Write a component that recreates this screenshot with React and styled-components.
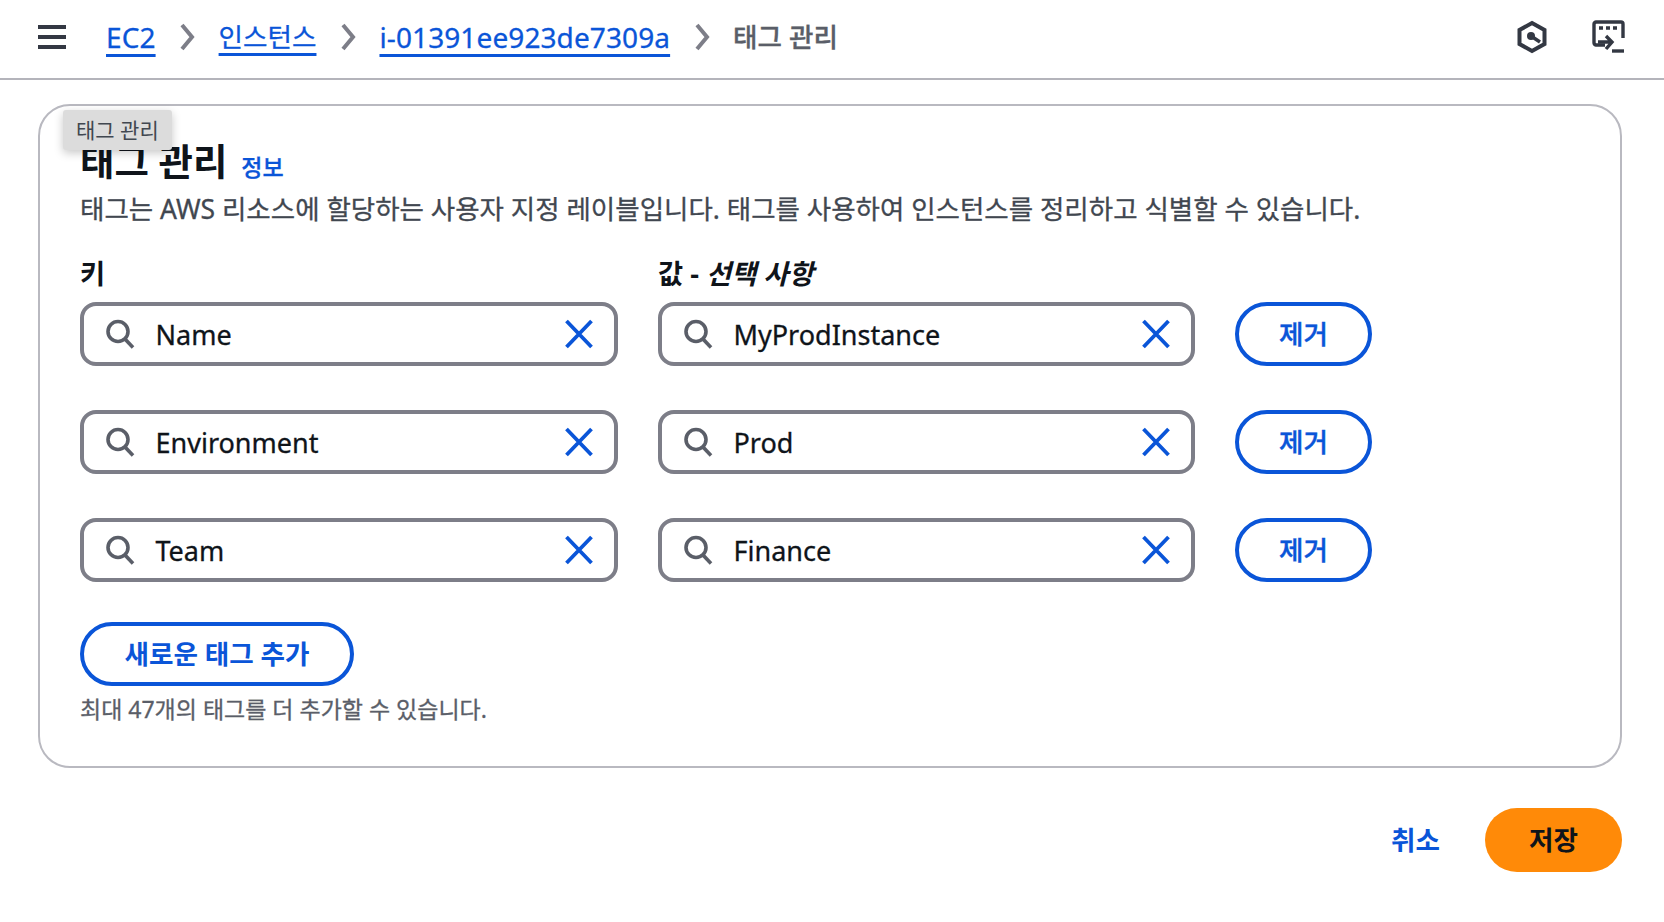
import React from "react";
import styled, { createGlobalStyle } from "styled-components";

const GlobalStyle = createGlobalStyle`
  * { box-sizing: border-box; }
  html, body { margin: 0; padding: 0; background: #fff; }
  body {
    font-family: "Noto Sans", "Noto Sans CJK KR", sans-serif;
    color: #0f141a;
  }
`;

const BLUE = "#0a55d8";

const Page = styled.div`
  width: 1664px;
  height: 922px;
  overflow: hidden;
`;

const TopBar = styled.header`
  height: 80px;
  border-bottom: 2px solid #b4b4bb;
  display: flex;
  align-items: center;
  padding: 0 39px 5px 37px;
`;

const MenuIcon = styled.svg`
  width: 30px;
  height: 30px;
  margin-right: 39px;
  flex: none;
`;

const Crumbs = styled.nav`
  display: flex;
  align-items: center;
  flex: 1;
  font-size: 28px;
  line-height: 40px;
  -webkit-text-stroke: 0.3px currentColor;
`;

const CrumbLink = styled.a`
  color: ${BLUE};
  font-size: ${(p) => (p.$ko ? "26.6px" : "28px")};
  letter-spacing: ${(p) => (p.$ko ? "0" : "0.1px")};
  text-decoration: underline;
  text-underline-offset: 6px;
  text-decoration-thickness: 2.500px;
`;

const CrumbCurrent = styled.span`
  color: #5a5e68;
  font-size: 26.6px;
  font-weight: 500;
`;

const Chevron = styled.svg`
  width: 18px;
  height: 28px;
  margin: 0 22.500px;
  flex: none;
`;

const TopIcons = styled.div`
  display: flex;
  align-items: center;
  gap: 43px;
`;

const Main = styled.main`
  padding: 24px 42px 0 38px;
`;

const Card = styled.section`
  position: relative;
  height: 664px;
  border: 2px solid #b9b9c0;
  border-radius: 32px;
  padding: 32px 40px 0 40px;
`;

const Tooltip = styled.div`
  position: absolute;
  top: 4px;
  left: 23px;
  height: 40px;
  padding: 0 13px 3px 13px;
  display: flex;
  align-items: center;
  background: #dcdcdc;
  border-radius: 3px;
  font-size: 21px;
  color: #414750;
  box-shadow: 0 3px 10px rgba(0, 0, 0, 0.22);
  z-index: 2;
`;

const TitleRow = styled.div`
  display: flex;
  align-items: baseline;
  gap: 14px;
`;

const Title = styled.h1`
  margin: 0;
  font-size: 37.400px;
  line-height: 48px;
  font-weight: 700;
`;

const InfoLink = styled.a`
  color: ${BLUE};
  font-size: 23px;
  font-weight: 500;
  -webkit-text-stroke: 0.3px currentColor;
`;

const Description = styled.p`
  margin: 3px 0 0;
  font-size: 26.500px;
  line-height: 40px;
  color: #414750;
  white-space: nowrap;
  -webkit-text-stroke: 0.3px currentColor;
`;

const Fields = styled.div`
  display: grid;
  grid-template-columns: 538px 537px 137px;
  column-gap: 40px;
  row-gap: 44px;
  margin-top: 27px;
`;

const FieldColumn = styled.div`
  display: flex;
  flex-direction: column;
  gap: 10px;
`;

const Label = styled.label`
  font-size: 27.300px;
  line-height: 36px;
  font-weight: 700;
  white-space: nowrap;
`;

const InputBox = styled.div`
  height: 64px;
  border: 4px solid #7d7e88;
  border-radius: 16px;
  display: flex;
  align-items: center;
  padding: 0 19.500px 0 20px;
  font-size: 27px;
`;

const InputValue = styled.span`
  flex: 1;
  margin-left: 19.500px;
  -webkit-text-stroke: 0.3px currentColor;
`;

const PillButton = styled.button`
  height: 64px;
  padding: 0 0 3px;
  width: ${(p) => p.$width}px;
  border: 4px solid ${BLUE};
  border-radius: 32px;
  background: #fff;
  color: ${BLUE};
  font-family: inherit;
  font-size: 26.600px;
  font-weight: ${(p) => p.$weight || 700};
  -webkit-text-stroke: ${(p) => (p.$weight ? "0.4px currentColor" : "0")};
`;

const RemoveCell = styled.div`
  align-self: end;
`;

const AddRow = styled.div`
  margin-top: 40px;
`;

const Helper = styled.p`
  margin: 5px 0 0;
  font-size: 23px;
  line-height: 36px;
  color: #5a5e68;
  -webkit-text-stroke: 0.3px currentColor;
`;

const Footer = styled.footer`
  display: flex;
  justify-content: flex-end;
  align-items: center;
  gap: 45px;
  margin-top: 40px;
`;

const TextButton = styled.a`
  color: ${BLUE};
  font-size: 26.600px;
  font-weight: 700;
  padding-bottom: 3px;
`;

const SaveButton = styled.button`
  width: 137px;
  height: 64px;
  padding: 0 0 3px;
  border: 0;
  border-radius: 32px;
  background: #ff8a08;
  color: #0f141a;
  font-family: inherit;
  font-size: 26.600px;
  font-weight: 700;
`;

const SearchIcon = () => (
  <svg width="32" height="32" viewBox="0 0 32 32" fill="none" stroke="#5a5e68" strokeWidth="3.6" style={{ flex: "none" }}>
    <circle cx="14" cy="13.5" r="10" />
    <path d="M21 21l8 8.5" />
  </svg>
);

const ClearIcon = () => (
  <svg width="32" height="32" viewBox="0 0 32 32" fill="none" stroke={BLUE} strokeWidth="3.8" style={{ flex: "none" }}>
    <path d="M3.5 3l25 26M28.500 3l-25 26" />
  </svg>
);

const Sep = () => (
  <Chevron viewBox="0 0 18 28" fill="none" stroke="#7d7e88" strokeWidth="4">
    <path d="M4 2l10 12L4 26" />
  </Chevron>
);

const rows = [
  ["Name", "MyProdInstance"],
  ["Environment", "Prod"],
  ["Team", "Finance"],
];

const Field = ({ value }) => (
  <InputBox>
    <SearchIcon />
    <InputValue>{value}</InputValue>
    <ClearIcon />
  </InputBox>
);

export default function App() {
  return (
    <Page>
      <GlobalStyle />
      <TopBar>
        <MenuIcon viewBox="0 0 30 30" fill="none" stroke="#333843" strokeWidth="4">
          <path d="M1 5h28M1 15h28M1 25h28" />
        </MenuIcon>
        <Crumbs>
          <CrumbLink>EC2</CrumbLink>
          <Sep />
          <CrumbLink $ko>인스턴스</CrumbLink>
          <Sep />
          <CrumbLink>i-01391ee923de7309a</CrumbLink>
          <Sep />
          <CrumbCurrent>태그 관리</CrumbCurrent>
        </Crumbs>
        <TopIcons>
          <svg width="32" height="34" viewBox="0 0 32 34" fill="none" stroke="#333843" strokeWidth="4">
            <path d="M16 3l12.500 7v14L16 31 3.500 24V10z" />
            <circle cx="15" cy="16" r="4" fill="#333843" stroke="none" />
            <path d="M15 16l9 6" strokeWidth="3.500" />
          </svg>
          <svg width="34" height="34" viewBox="0 0 34 34" fill="none" stroke="#333843" strokeWidth="3.400">
            <path d="M14 25H5a2.500 2.500 0 0 1-2-2.500V4.500A2.500 2.500 0 0 1 5 2h25a2 2 0 0 1 2 2v14" />
            <path d="M8 8h4M15 8h4M22 8h4" />
            <path d="M7 22h13M15 16l6 6-6 7" />
            <path d="M21 31h12" />
          </svg>
        </TopIcons>
      </TopBar>
      <Main>
        <Card>
          <Tooltip>태그 관리</Tooltip>
          <TitleRow>
            <Title>태그 관리</Title>
            <InfoLink>정보</InfoLink>
          </TitleRow>
          <Description>
            태그는 AWS 리소스에 할당하는 사용자 지정 레이블입니다. 태그를 사용하여 인스턴스를 정리하고 식별할 수 있습니다.
          </Description>
          <Fields>
            {rows.map(([key, value], i) => (
              <React.Fragment key={key}>
                <FieldColumn>
                  {i === 0 && <Label>키</Label>}
                  <Field value={key} />
                </FieldColumn>
                <FieldColumn>
                  {i === 0 && (
                    <Label>
                      값 - <em>선택 사항</em>
                    </Label>
                  )}
                  <Field value={value} />
                </FieldColumn>
                <RemoveCell>
                  <PillButton $width={137} $weight={500}>제거</PillButton>
                </RemoveCell>
              </React.Fragment>
            ))}
          </Fields>
          <AddRow>
            <PillButton $width={274}>새로운 태그 추가</PillButton>
          </AddRow>
          <Helper>최대 47개의 태그를 더 추가할 수 있습니다.</Helper>
        </Card>
        <Footer>
          <TextButton>취소</TextButton>
          <SaveButton>저장</SaveButton>
        </Footer>
      </Main>
    </Page>
  );
}
